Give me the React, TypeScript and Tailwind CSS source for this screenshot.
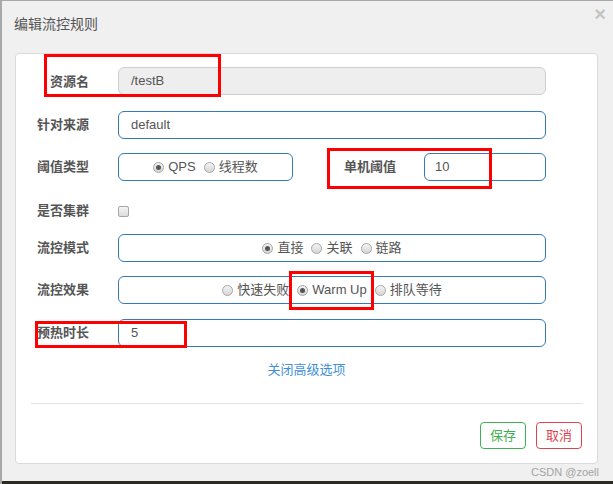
import React from 'react';

const font = { fontFamily: '"Liberation Sans", "Noto Sans CJK SC", sans-serif' };

function Radio({ checked }: { checked?: boolean }) {
  return (
    <span className="relative inline-flex h-[11px] w-[11px] shrink-0 items-center justify-center rounded-full border border-[#a6a6a6] bg-gradient-to-b from-[#f4f4f4] to-[#d6d6d6]">
      {checked && <span className="h-[5px] w-[5px] rounded-full bg-[#555]" />}
    </span>
  );
}

function RadioItem({ label, checked }: { label: string; checked?: boolean }) {
  return (
    <span className="inline-flex items-center gap-[4px]">
      <Radio checked={checked} />
      <span>{label}</span>
    </span>
  );
}

function Label({ children, className = '' }: { children: React.ReactNode; className?: string }) {
  return (
    <div className={`shrink-0 text-right text-[13px] font-bold text-[#555] ${className}`}>{children}</div>
  );
}

function Mark({ className }: { className: string }) {
  return <div className={`pointer-events-none absolute border-[3px] border-[#ff0000] ${className}`} />;
}

export default function App() {
  const box = 'h-[28px] rounded-[6px] border border-[#337ab7] bg-white text-[13px] text-[#555]';
  return (
    <div
      className="relative h-[484px] w-[613px] overflow-hidden border-l-2 border-t border-[#a8a8a8] bg-[#f0f0f0]"
      style={font}
    >
      {/* header */}
      <div className="flex h-[52px] items-center pl-[12px] pb-[6px] text-[14px] text-[#555]">编辑流控规则</div>
      <div className="absolute right-[7px] top-[1px] text-[20px] font-bold leading-[24px] text-[#c4c4c4]">×</div>

      {/* card */}
      <div className="ml-[13px] mr-[15px] h-[411px] rounded-[4px] border border-[#dadada] bg-white pr-[51px]">
        <div className="mt-[13px] flex h-[28px] items-center">
          <Label className="w-[73px] pt-[2px]">资源名</Label>
          <div className="ml-[29px] flex h-[28px] flex-1 items-center rounded-[6px] border border-[#cfcfcf] bg-[#eeeeee] pl-[12px] text-[13px] text-[#555]">
            /testB
          </div>
        </div>

        <div className="mt-[16px] flex h-[28px] items-center">
          <Label className="w-[73px]">针对来源</Label>
          <div className={`ml-[29px] flex flex-1 items-center pl-[12px] ${box}`}>default</div>
        </div>

        <div className="mt-[14px] flex h-[28px] items-center">
          <Label className="w-[73px]">阈值类型</Label>
          <div className={`ml-[29px] flex w-[175px] items-center justify-center gap-[8px] ${box}`}>
            <RadioItem label="QPS" checked />
            <RadioItem label="线程数" />
          </div>
          <Label className="w-[103px]">单机阈值</Label>
          <div className={`ml-[28px] flex flex-1 items-center pl-[10px] ${box}`}>10</div>
        </div>

        <div className="mt-[17px] flex h-[26px] items-center">
          <Label className="w-[73px]">是否集群</Label>
          <span className="ml-[29px] h-[11px] w-[11px] rounded-[2px] border border-[#a6a6a6] bg-gradient-to-b from-[#f4f4f4] to-[#dcdcdc]" />
        </div>

        <div className="mt-[10px] flex h-[28px] items-center">
          <Label className="w-[73px]">流控模式</Label>
          <div className={`ml-[29px] flex flex-1 items-center justify-center gap-[8px] ${box}`}>
            <RadioItem label="直接" checked />
            <RadioItem label="关联" />
            <RadioItem label="链路" />
          </div>
        </div>

        <div className="mt-[14px] flex h-[28px] items-center">
          <Label className="w-[73px]">流控效果</Label>
          <div className={`ml-[29px] flex flex-1 items-center justify-center gap-[8px] ${box}`}>
            <RadioItem label="快速失败" />
            <RadioItem label="Warm Up" checked />
            <RadioItem label="排队等待" />
          </div>
        </div>

        <div className="mt-[15px] flex h-[28px] items-center">
          <Label className="w-[73px]">预热时长</Label>
          <div className={`ml-[29px] flex flex-1 items-center pl-[12px] ${box}`}>5</div>
        </div>

        <div className="mt-[14px] ml-[51px] flex h-[18px] items-center justify-center text-[13px] text-[#3f8fd6]">
          关闭高级选项
        </div>

        <div className="mt-[24px] ml-[15px] mr-[-37px] h-px bg-[#e3e3e3]" />

        <div className="mt-[18px] mr-[-36px] flex justify-end gap-[10px]">
          <div className="flex h-[27px] w-[46px] items-center justify-center rounded-[4px] border border-[#3fae54] text-[13px] text-[#3fae54]">
            保存
          </div>
          <div className="flex h-[27px] w-[46px] items-center justify-center rounded-[4px] border border-[#dc4450] text-[13px] text-[#dc4450]">
            取消
          </div>
        </div>
      </div>

      <div className="mt-[1px] pr-[14px] text-right text-[11px] leading-[14px] text-[#a3a3a3]">CSDN @zoell</div>
      <div className="absolute bottom-0 left-0 right-0 h-[3px] bg-[#2c2c24]" />

      {/* red annotation boxes */}
      <Mark className="left-[42px] top-[53px] h-[43px] w-[177px]" />
      <Mark className="left-[325px] top-[147px] h-[41px] w-[165px]" />
      <Mark className="left-[287px] top-[270px] h-[39px] w-[85px]" />
      <Mark className="left-[33px] top-[320px] h-[27px] w-[152px]" />
    </div>
  );
}
